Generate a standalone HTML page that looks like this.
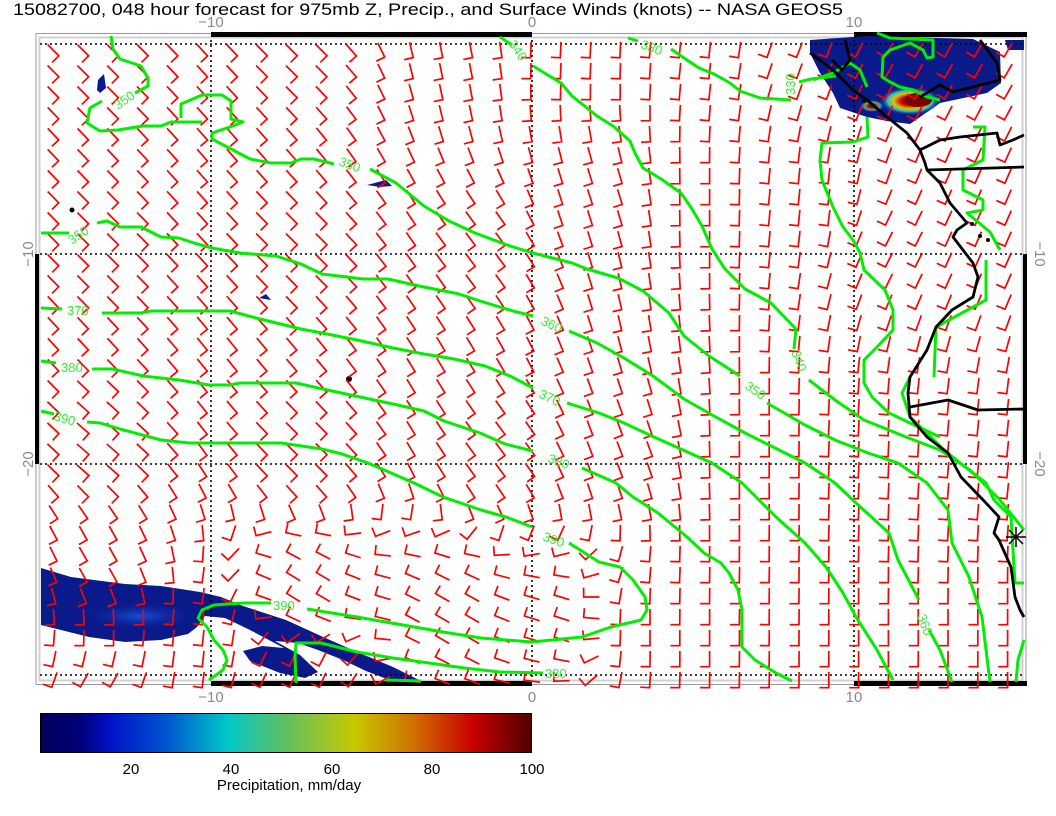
<!DOCTYPE html>
<html><head><meta charset="utf-8"><style>
html,body{margin:0;padding:0;background:#fff;width:1056px;height:816px;overflow:hidden}
svg{display:block}
text{font-family:"Liberation Sans",sans-serif}
</style></head><body>
<svg id="s" width="1056" height="816" viewBox="0 0 1056 816" xmlns="http://www.w3.org/2000/svg">
<defs>
<linearGradient id="jet" x1="0" x2="1" y1="0" y2="0">
<stop offset="0" stop-color="#00005a"/><stop offset="0.08" stop-color="#000078"/>
<stop offset="0.14" stop-color="#0010c8"/><stop offset="0.26" stop-color="#0058d0"/>
<stop offset="0.38" stop-color="#00c8c8"/><stop offset="0.5" stop-color="#60c060"/>
<stop offset="0.64" stop-color="#c8c800"/><stop offset="0.76" stop-color="#d07000"/>
<stop offset="0.88" stop-color="#c80000"/><stop offset="1" stop-color="#500000"/>
</linearGradient>
<radialGradient id="hot" cx="0.5" cy="0.5" r="0.5">
<stop offset="0" stop-color="#600000"/><stop offset="0.3" stop-color="#c80000"/>
<stop offset="0.55" stop-color="#e0c000"/><stop offset="0.75" stop-color="#30c0c0"/>
<stop offset="1" stop-color="#0030b0" stop-opacity="0"/>
</radialGradient>
<radialGradient id="lb" cx="0.5" cy="0.5" r="0.5">
<stop offset="0" stop-color="#1a50d8"/><stop offset="1" stop-color="#0a1a90" stop-opacity="0"/>
</radialGradient>
</defs>
<text x="13" y="15" font-size="17" fill="#000" textLength="830" lengthAdjust="spacingAndGlyphs">15082700, 048 hour forecast for 975mb Z, Precip., and Surface Winds (knots) -- NASA GEOS5</text>
<g fill="#8a8a8a" font-size="15" text-anchor="middle">
<text x="211" y="27">−10</text><text x="532" y="27">0</text><text x="854" y="27">10</text>
<text x="211" y="702">−10</text><text x="532" y="702">0</text><text x="854" y="702">10</text>
<text transform="translate(33,254) rotate(-90)">−10</text>
<text transform="translate(33,464) rotate(-90)">−20</text>
<text transform="translate(1035,254) rotate(90)">−10</text>
<text transform="translate(1035,464) rotate(90)">−20</text>
</g>
<rect x="36" y="33.5" width="990" height="651" fill="none" stroke="#999" stroke-width="1"/>
<rect x="39.5" y="37.5" width="983" height="643" fill="none" stroke="#d0d0d0" stroke-width="2"/>
<g fill="#000">
<rect x="211" y="32" width="321" height="5"/><rect x="854" y="32" width="173" height="5"/>
<rect x="211" y="681" width="321" height="5"/><rect x="854" y="681" width="173" height="5"/>
<rect x="35" y="254" width="4" height="210"/><rect x="1023" y="254" width="4" height="210"/>
</g>
<g id="precip">
<path d="M810,40 L867,36 L973,39 L1000,52 L1001,83 L987,93 L940,103 L910,124 L887,121 L867,117 L840,108 L833,93 L820,73 L810,53Z" fill="#0a1a8a"/>
<path d="M1005,40 L1024,40 L1024,50 L1008,50Z" fill="#0a1a8a"/>
<ellipse cx="910" cy="101" rx="30" ry="14" fill="url(#hot)"/>
<ellipse cx="918" cy="100" rx="14" ry="7" fill="#7a0000"/>
<ellipse cx="872" cy="106" rx="12" ry="6" fill="url(#hot)" opacity="0.7"/>
<path d="M41,568 L71,577 L125,584 L161,586 L200,592 L221,597 L243,606 L286,620 L321,636 L357,652 L393,667 L421,681 L392,681 L366,671 L343,660 L318,650 L298,643 L275,641 L300,655 L318,672 L305,678 L280,673 L250,661 L243,651 L262,646 L284,648 L250,630 L225,618 L205,616 L197,627 L188,634 L161,640 L125,642 L89,637 L41,625Z" fill="#0a1a8a"/>
<ellipse cx="140" cy="616" rx="60" ry="14" fill="url(#lb)"/>
<path d="M98,80 L104,74 L106,88 L100,93 L97,90Z" fill="#0a1a8a"/>
<path d="M367,185 L386,180 L392,186 L380,187Z" fill="#0a1a8a"/>
<path d="M259,298 L266,294 L271,300Z" fill="#0a1a8a"/>
<circle cx="72" cy="210" r="2.5" fill="#000"/><circle cx="349" cy="379" r="3" fill="#000"/>
</g>
<g stroke="#000" stroke-width="1.6" stroke-dasharray="2,3" fill="none">
<line x1="40" y1="44" x2="1022" y2="44"/><line x1="40" y1="254" x2="1022" y2="254"/>
<line x1="40" y1="464" x2="1022" y2="464"/><line x1="40" y1="675" x2="1022" y2="675"/>
<line x1="211" y1="40" x2="211" y2="680"/><line x1="532" y1="40" x2="532" y2="680"/>
<line x1="854" y1="40" x2="854" y2="680"/>
</g>
<g id="barbs" stroke="#ff0000" stroke-width="1.7" fill="none" stroke-linecap="square"></g>
<g stroke="#00ee00" stroke-width="3" fill="none" stroke-linejoin="round">
<polyline points="111,36 113,49 120,59 141,66 148,78 148,86 135,93"/>
<polyline points="102,101 90,108 87,123 100,131 118,130 143,126 161,126 171,122 202,122"/>
<polyline points="181,118 181,104 202,95 222,95 231,101 231,119 243,122 230,127 212,133 212,139 250,159 271,163 291,163 301,159 314,159 334,164"/>
<polyline points="370,169 396,183 424,206 449,221 475,233 510,246 533,253 572,263 587,269 618,278 643,291 669,313 684,336 709,356 740,376"/>
<polyline points="767,403 805,425 835,440 868,453 898,463 927,483 948,510 952,543 969,577 982,617 990,682"/>
<polyline points="500,37 512,45"/>
<polyline points="533,66 561,83 572,96 597,116 613,126 630,141 635,153 643,168 661,179 681,193 692,209 702,226 712,249 725,269 745,289 771,303 796,329 794,349"/>
<polyline points="809,380 835,400 864,420 906,437 940,450 970,470 1000,500 1024,530"/>
<polyline points="41,233 69,233"/>
<polyline points="97,223 107,221 120,227 141,227 161,237 179,238 194,243 212,248 240,253 276,256 301,264 322,274 363,279 388,279 419,286 459,294 480,301 513,311 533,316"/>
<polyline points="569,331 597,343 624,358 653,376 684,399 714,416 745,433 771,446 805,463 835,483 856,503 889,533 898,560 919,600"/>
<polyline points="929,630 940,650 952,682"/>
<polyline points="41,308 62,309"/>
<polyline points="102,313 141,313 151,311 230,311 260,319 301,329 327,334 357,340 393,348 424,354 454,359 485,366 510,376 533,388"/>
<polyline points="567,403 599,413 624,423 654,437 683,450 712,463 742,483 776,517 805,543 826,567 843,593 856,617 877,650 893,680"/>
<polyline points="41,361 56,363"/>
<polyline points="92,369 113,369 143,376 179,380 209,385 230,385 240,383 296,383 332,391 393,404 424,411 444,421 480,433 505,444 533,451"/>
<polyline points="582,468 616,483 633,497 658,513 675,527 687,537 704,553 721,563 729,573 738,590 742,610 742,647 755,660 776,673 792,681"/>
<polyline points="41,411 54,414"/>
<polyline points="87,422 100,423 120,429 161,440 189,443 281,443 322,449 342,454 368,463 414,483 443,497 481,510 506,517 532,527"/>
<polyline points="569,543 599,562 620,567 633,580 645,597 647,610 641,620 611,627 582,637 532,642 481,638 443,632 357,617 307,609"/>
<polyline points="271,603 243,603 214,605 202,610 198,618 207,627 214,640 223,650 227,660 223,670 209,680"/>
<polyline points="296,683 295,657 296,643 321,643 357,652 393,658 429,663 464,668 500,672 543,673"/>
<polyline points="386,680 421,681"/>
<polyline points="628,38 638,41"/>
<polyline points="671,49 684,58 699,68 714,74 730,83 740,91 760,98 791,100"/>
<polyline points="799,82 811,79 836,76"/>
<polyline points="867,117 868,137 853,142 822,143 820,160 822,180 833,207 843,227 853,240 860,253 864,270 885,290 893,310 893,330 877,347 864,360 864,383 872,397 889,413 910,423 940,437"/>
<polyline points="813,80 833,73 850,63 860,70 867,87"/>
<polyline points="877,33 890,38 933,40 933,57 927,58 923,50 910,43 890,50 883,57 882,77 890,82 900,87 913,90 927,97 940,100"/>
<polyline points="973,127 985,127 983,160 963,170 963,190 983,200 983,210 967,213 990,232 1000,250"/>
<polyline points="986,260 986,300 936,327 934,377"/>
<polyline points="910,377 902,393 910,417 931,437 944,450 969,470 986,483 994,500 1011,517 1015,583 1024,583"/>
<polyline points="1024,640 1018,660 1016,682"/>
</g>
<g fill="#33ee33" font-size="13">
<text transform="translate(118,110) rotate(-35)">350</text>
<text transform="translate(338,165) rotate(20)">350</text>
<text transform="translate(72,245) rotate(-35)">350</text>
<text x="67" y="315">370</text>
<text x="61" y="372">380</text>
<text transform="translate(53,420) rotate(15)">390</text>
<text transform="translate(540,324) rotate(25)">360</text>
<text transform="translate(538,397) rotate(25)">370</text>
<text transform="translate(547,462) rotate(20)">380</text>
<text transform="translate(542,540) rotate(20)">390</text>
<text x="273" y="610">390</text>
<text transform="translate(545,678)">380</text>
<text transform="translate(508,44) rotate(55)">340</text>
<text transform="translate(640,48) rotate(20)">330</text>
<text transform="translate(791,352) rotate(70)">340</text>
<text transform="translate(744,388) rotate(35)">350</text>
<text transform="translate(917,616) rotate(70)">360</text>
<text transform="translate(795,95) rotate(-90)">330</text>
</g>
<g stroke="#000" stroke-width="2.8" fill="none" stroke-linejoin="round">
<polyline points="810,53 833,70 853,90 867,100 887,117 907,133 920,150 925,163 927,170 940,183 950,203 967,223 957,230 953,237 963,250 973,263 978,277 973,297 952,310 936,327 927,350 910,377 908,393 910,417 927,437 948,453 961,477 986,503 999,517 994,533 999,540 1011,567 1015,597 1020,610 1024,617"/>
<polyline points="927,170 1024,167"/>
<polyline points="920,150 940,140 960,137 997,133 1000,145 1013,140 1024,135"/>
<polyline points="980,40 997,63 1000,80 973,87 953,92 940,85 920,97"/>
<polyline points="910,407 948,400 978,410 1024,409"/>
<polyline points="845,40 850,60 842,70 832,60"/>
<line x1="1006" y1="537" x2="1026" y2="537" stroke-width="1.5"/>
<line x1="1016" y1="527" x2="1016" y2="547" stroke-width="1.5"/>
<line x1="1009" y1="530" x2="1023" y2="544" stroke-width="1.5"/>
<line x1="1023" y1="530" x2="1009" y2="544" stroke-width="1.5"/>
</g>
<g fill="#000"><circle cx="972" cy="224" r="2"/><circle cx="980" cy="236" r="2"/><circle cx="988" cy="240" r="2"/><circle cx="864" cy="101" r="2"/></g>
<rect x="40.5" y="713.5" width="491" height="39" fill="url(#jet)" stroke="#000" stroke-width="1"/>
<g font-size="15" fill="#000" text-anchor="middle">
<text x="131" y="774">20</text><text x="231" y="774">40</text><text x="332" y="774">60</text>
<text x="432" y="774">80</text><text x="532" y="774">100</text>
<text x="289" y="790">Precipitation, mm/day</text>
</g>
</svg>
<script>
(function(){
var A=[
[100,55,-0.7,-0.7],[300,55,-0.7,-0.7],[460,55,-0.2,-1],[560,55,0.05,-1],[700,55,0.1,-1],[800,55,0.35,-0.94],[900,55,0.5,-0.87],[1000,55,0.5,-0.87],
[100,250,-0.7,-0.7],[300,250,-0.7,-0.7],[480,250,-0.6,-0.8],[600,200,-0.3,-0.95],[700,200,0,-1],[800,200,0.1,-1],[900,250,0.45,-0.9],[1000,250,0.4,-0.9],
[100,450,-0.75,-0.65],[300,450,-0.7,-0.7],[500,450,-0.6,-0.8],[620,450,-0.35,-0.94],[750,450,0,-1],[880,450,0.05,-1],[1000,450,0.1,-1],
[100,570,-0.5,-0.85],[100,640,0,-1],[200,640,0.1,-1],[300,590,0.8,0.5],[450,620,0.85,0.5],[560,620,0.9,0.3],[640,630,0,-1],
[700,640,0,-1],[850,640,0,-1],[1000,640,0,-1],[100,682,0.5,-0.85],[300,682,0.4,-0.9]];
var g=document.getElementById('barbs'),d='';
for(var r=0;r<31;r++){var y=51+r*21;if(y>684)break;
 for(var c=0;c<33;c++){var x=54+c*29.8;
  var sx=0,sy=0;
  for(var i=0;i<A.length;i++){var dx=A[i][0]-x,dy=A[i][1]-y,w=1/Math.pow(dx*dx+dy*dy+50,1.6);sx+=w*A[i][2];sy+=w*A[i][3];}
  var n=Math.sqrt(sx*sx+sy*sy)||1;sx/=n;sy/=n;
  var L=15,F=8.5;
  var ax=x-sx*L*0.45,ay=y-sy*L*0.45,bx=ax+sx*L,by=ay+sy*L,fx=ax+sy*F,fy=ay-sx*F;
  d+='M'+bx.toFixed(1)+','+by.toFixed(1)+'L'+ax.toFixed(1)+','+ay.toFixed(1)+'L'+fx.toFixed(1)+','+fy.toFixed(1);
 }}
var p=document.createElementNS('http://www.w3.org/2000/svg','path');p.setAttribute('d',d);g.appendChild(p);
})();
</script>
</body></html>
